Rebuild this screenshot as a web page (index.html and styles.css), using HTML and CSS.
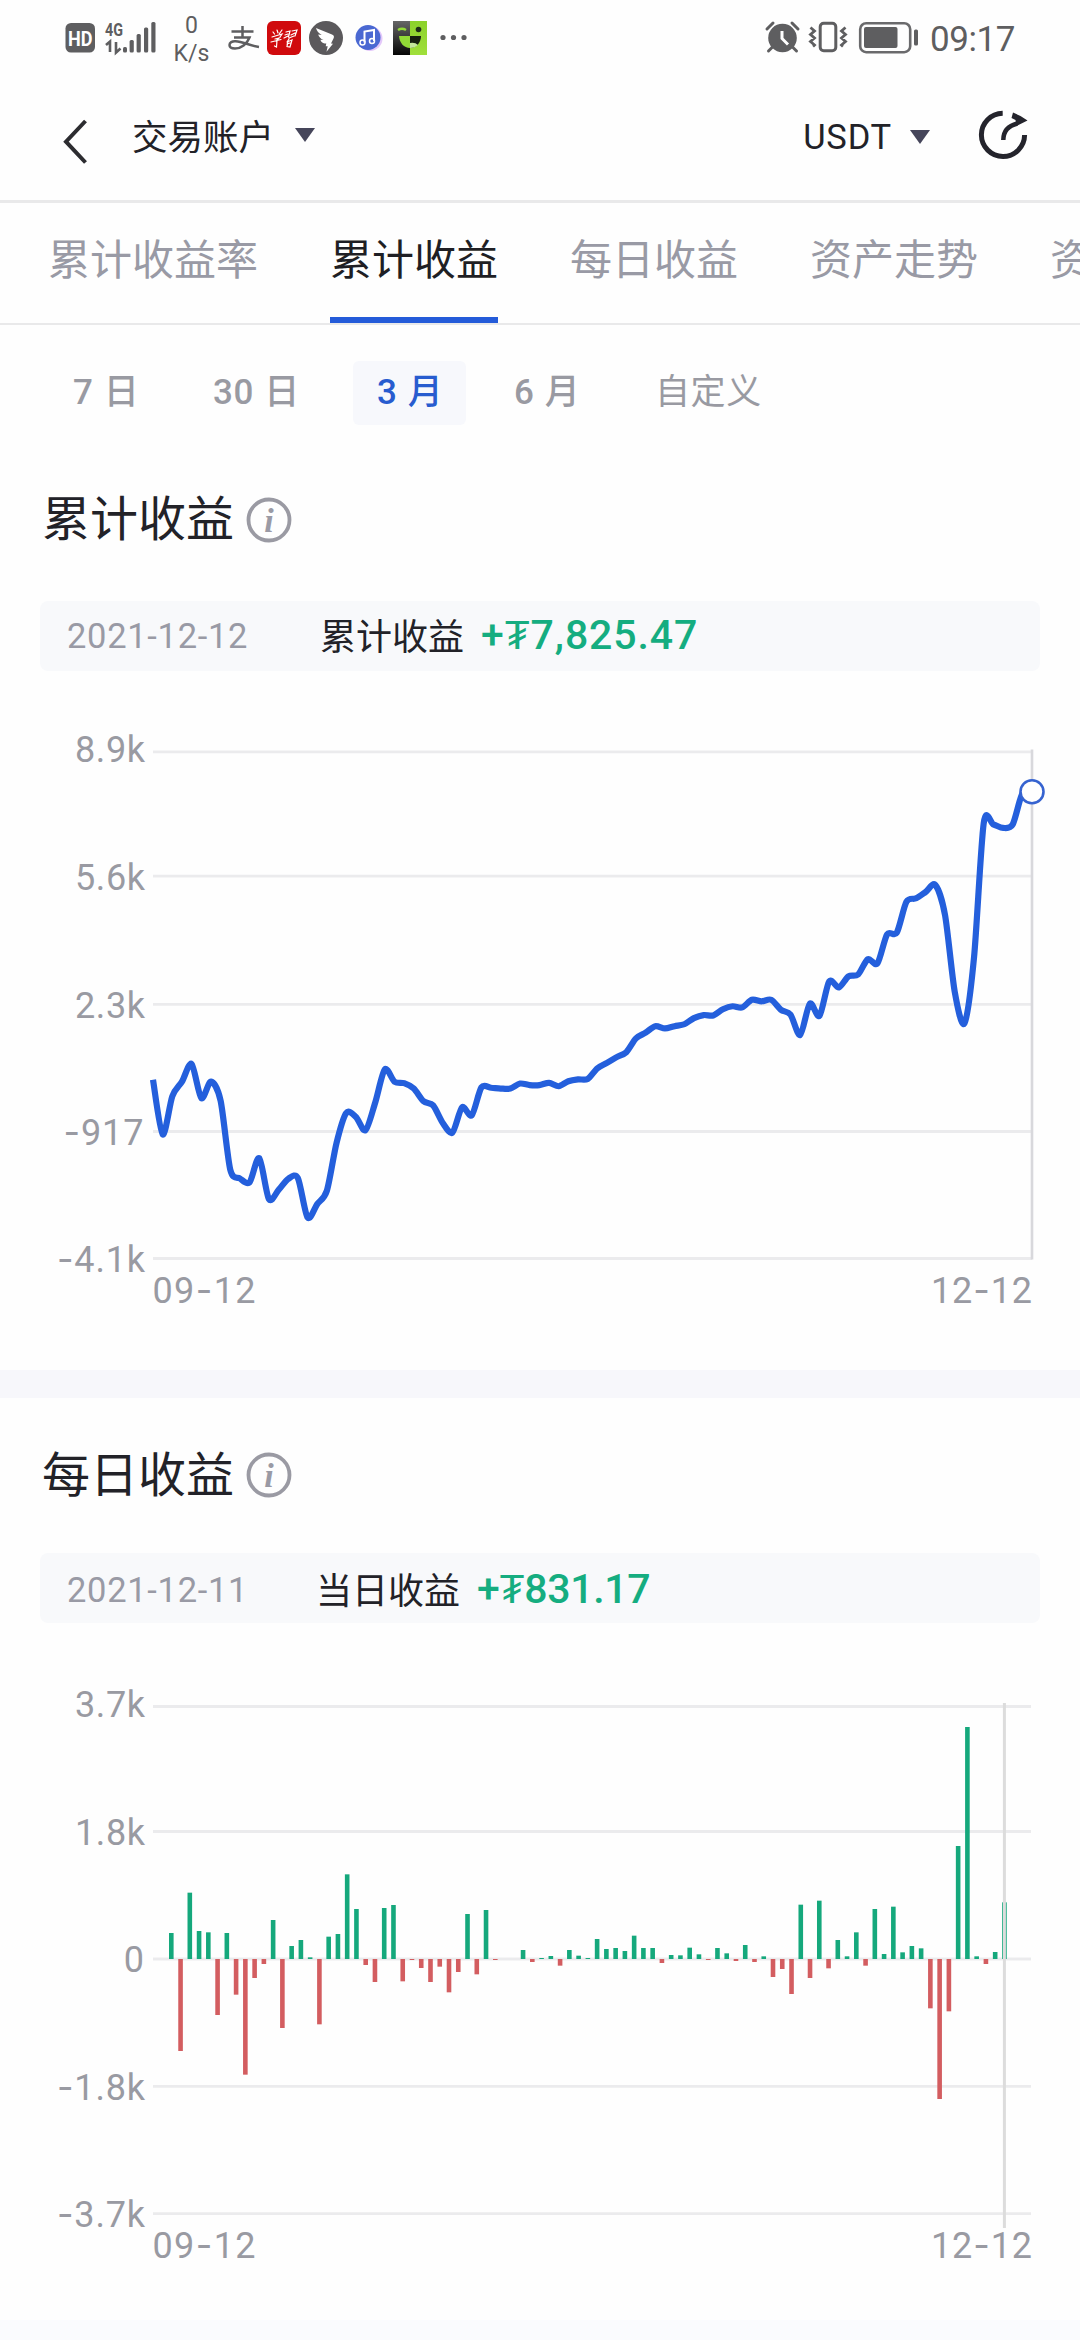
FILE: index.html
```html
<!DOCTYPE html>
<html lang="zh-CN">
<head>
<meta charset="utf-8">
<title>交易账户</title>
<link rel="stylesheet" href="styles.css">
</head>
<body>
<div class="status">
  <svg class="status-left" viewBox="0 0 480 76" width="480" height="76">
    <rect x="65.500" y="23" width="29.500" height="29.500" rx="5.500" fill="#5e5e60"/>
    <text class="st-hd" x="68" y="45.500" textLength="24.500" lengthAdjust="spacingAndGlyphs">HD</text>
    <text class="st-4g" x="105" y="36" textLength="18" lengthAdjust="spacingAndGlyphs">4G</text>
    <path d="M106 45l4-3.500v10.500M116 42v10.500l4.500-4" fill="none" stroke="#5e5e60" stroke-width="2.600"/>
    <g fill="#5e5e60"><rect x="123" y="47" width="4" height="5.500" rx="1.500"/><rect x="129.600" y="40" width="4.200" height="12.500" rx="1.500"/><rect x="136.600" y="34" width="4.200" height="18.500" rx="1.500"/><rect x="144" y="27.500" width="4.200" height="25" rx="1.500"/><rect x="151.300" y="22" width="4.200" height="30.500" rx="1.500"/></g>
    <text class="st-net" x="191.500" y="33" text-anchor="middle">0</text>
    <text class="st-net" x="191.500" y="60.500" text-anchor="middle">K/s</text>
    <path d="M231.500 31.500h22M242.500 26v11.500M234 37.500h15.500c-2.500 6.500-8.500 11-14.500 11-3.500 0-5.500-1.300-5.500-3.500 0-2.500 2.500-4 6-3.800 8 .500 13 4.300 23.500 5.800" fill="none" stroke="#5e5e60" stroke-width="2.500"/>
    <rect x="267" y="21" width="34" height="34" rx="6" fill="#d00a0d"/>
    <g fill="none" stroke="#fff" stroke-width="1.200" stroke-linecap="round"><path d="M273 32l1.500 2M277 30l1 3M282 30l-2.500 3.500M272 37l10-3-2 3M275 39l4-1-3 3M271 42l10-2.500M277 40l-.500 7-2-1"/><path d="M286 32l4-1-1.500 6M285 35l3-1M284 38l4-2M292 31l5-1-2 6M291 35l4-2M289 38l5-2M289 39l-2 3M287 42l5-2-2 7-3-.500 1-5M287 44l3-1"/></g>
    <circle cx="326" cy="38" r="17" fill="#5b595c"/>
    <path d="M316 28l16 6.500c2 .800 2.400 2 1.500 4l-2.500 5 2 .200-6.500 8 1.200-5.500h-2l.600-2.700c-4 0-5.500-2-5.800-3.800l3 .300c-3-1.300-4.800-3.300-5.300-5.500l3.500.500c-3-2-5-4-5.700-7z" fill="#fff"/>
    <circle cx="370" cy="38.500" r="12.500" fill="#e3c8fa"/><circle cx="368" cy="37.500" r="12.500" fill="#4a68d2"/>
    <path d="M364.500 42.500v-11l9.500-1.500v11" fill="none" stroke="#fff" stroke-width="2"/><circle cx="362.500" cy="42.500" r="2.500" fill="none" stroke="#fff" stroke-width="1.500"/><circle cx="372" cy="41" r="2.500" fill="none" stroke="#fff" stroke-width="1.500"/>
    <defs><linearGradient id="face-dark" x1="0" y1="0" x2="0" y2="1"><stop offset="0" stop-color="#666"/><stop offset="1" stop-color="#050505"/></linearGradient><linearGradient id="face-light" x1="0" y1="0" x2="0" y2="1"><stop offset="0" stop-color="#8bd22b"/><stop offset="1" stop-color="#a0df3b"/></linearGradient></defs>
    <rect x="393" y="21" width="17" height="34" fill="url(#face-dark)"/><rect x="410" y="21" width="17" height="34" fill="url(#face-light)"/>
    <path d="M398 30q4-2.500 8 0" fill="none" stroke="#91d936" stroke-width="2.400"/><circle cx="418.500" cy="29.500" r="2.800" fill="#1e2d19"/>
    <path d="M399 36h11v12c-6 0-10.500-5-11-12z" fill="#91d936"/><path d="M410 36h11c0 7-5 12-11 12z" fill="#17200f"/><path d="M410 43q5-1 8 2-3 3-8 3z" fill="#c5e89b"/>
    <g fill="#5e5e60"><circle cx="443" cy="37.500" r="2.600"/><circle cx="453.500" cy="37.500" r="2.600"/><circle cx="464" cy="37.500" r="2.600"/></g>
  </svg>
  <svg class="status-right" viewBox="760 0 320 76" width="320" height="76">
    <circle cx="782.500" cy="38" r="14.300" fill="#5e5e60"/>
    <path d="M767 29l6-6M792 23l6 6M768.500 51l4-4M796.500 51l-4-4" stroke="#5e5e60" stroke-width="3" fill="none" stroke-linecap="round"/>
    <path d="M782 31v7.500l6 6" fill="none" stroke="#fff" stroke-width="3"/>
    <rect x="820.200" y="23.200" width="15.600" height="27.600" rx="3.500" fill="none" stroke="#5e5e60" stroke-width="3"/>
    <path d="M810.500 27.500l4 3.500-4 3.500 4 3.500-4 3.500 4 3.500-1.500 1.500M845.500 27.500l-4 3.500 4 3.500-4 3.500 4 3.500-4 3.500 1.500 1.500" fill="none" stroke="#5e5e60" stroke-width="2.800"/>
    <rect x="860.200" y="23.200" width="50" height="29" rx="6" fill="none" stroke="#6a6a6c" stroke-width="2.600"/>
    <rect x="864" y="27" width="33.500" height="21" rx="2" fill="#5e5e60"/><rect x="914" y="29.500" width="4" height="16" rx="1.500" fill="#5e5e60"/>
    <text class="st-time" x="930" y="51" textLength="85.500">09:17</text>
  </svg>
</div>

<header class="header">
  <svg class="back" viewBox="0 0 24 46" width="24" height="46"><path d="M22.500 2L3 22.700 22.500 43.500" fill="none" stroke="#2c2c30" stroke-width="4"/></svg>
  <span class="account">交易账户</span><i class="caret"></i>
  <span class="currency">USDT</span><i class="caret caret-low"></i>
  <svg class="share" viewBox="0 0 52 52" width="52" height="52"><path d="M25.700 4.200A21.600 21.600 0 1 0 47.600 26" fill="none" stroke="#24242c" stroke-width="5"/><path d="M26.300 31c0-8.500 4-14 14-16.500" fill="none" stroke="#24242c" stroke-width="4.500"/><path d="M36 3.500l7.500 3.500 7 4.500-11 5.500-1-6-4-2z" fill="#24242c"/></svg>
</header>

<nav class="tabs"><span>累计收益率</span><span class="active">累计收益</span><span>每日收益</span><span>资产走势</span><span>资</span></nav>

<div class="periods"><span>7 日</span><span>30 日</span><span class="active">3 月</span><span>6 月</span><span class="custom">自定义</span></div>

<section class="panel">
  <h2>累计收益<svg class="info" viewBox="0 0 46 46" width="46" height="46"><circle cx="23" cy="23" r="20.500"/><text x="23" y="34.500" text-anchor="middle">i</text></svg></h2>
  <div class="summary summary-total"><span class="date">2021-12-12</span><span class="label">累计收益</span><span class="amount">+₮7,825.47</span></div>
  <svg class="chart" id="total" viewBox="0 671 1080 699" width="1080" height="699">
    <path class="grid" d="M153 751.800H1032M153 876.200H1032M153 1004.300H1032M153 1131.500H1032M153 1258.500H1032"/>
    <path class="cursor" d="M1032 749.500V1259.500"/>
    <g class="axis" text-anchor="end">
      <text x="145" y="762" textLength="70">8.9k</text><text x="145" y="890" textLength="70">5.6k</text><text x="145" y="1017.500" textLength="70">2.3k</text>
      <text x="143.500" y="1145" textLength="80"><tspan class="dash">-</tspan>917</text><text x="145" y="1272" textLength="88"><tspan class="dash">-</tspan>4.1k</text>
    </g>
    <text class="axis" x="152.500" y="1303" textLength="103">09<tspan class="dash">-</tspan>12</text>
    <text class="axis" x="1032" y="1303" text-anchor="end" textLength="101">12<tspan class="dash">-</tspan>12</text>
    <path class="line" id="line"/>
    <circle cx="1032" cy="791.700" r="11.500" fill="#fff" stroke="#3663d0" stroke-width="2.600"/>
  </svg>
</section>

<section class="panel panel-next">
  <h2>每日收益<svg class="info" viewBox="0 0 46 46" width="46" height="46"><circle cx="23" cy="23" r="20.500"/><text x="23" y="34.500" text-anchor="middle">i</text></svg></h2>
  <div class="summary summary-day"><span class="date">2021-12-11</span><span class="label">当日收益</span><span class="amount">+₮831.17</span></div>
  <svg class="chart" id="daily" viewBox="0 1623 1080 697" width="1080" height="697">
    <path class="grid" d="M153 1706.500H1031M153 1831.500H1031M153 1959H1031M153 2086.400H1031M153 2213.700H1031"/>
    <g id="bars"></g>
    <path class="cursor cursor-day" d="M1004.400 1703V2228"/>
    <g class="axis" text-anchor="end">
      <text x="145" y="1717" textLength="70">3.7k</text><text x="145" y="1845" textLength="70">1.8k</text><text x="144" y="1972">0</text>
      <text x="145" y="2099.500" textLength="88"><tspan class="dash">-</tspan>1.8k</text><text x="145" y="2226.700" textLength="88"><tspan class="dash">-</tspan>3.7k</text>
    </g>
    <text class="axis" x="152.500" y="2258" textLength="103">09<tspan class="dash">-</tspan>12</text>
    <text class="axis" x="1032" y="2258" text-anchor="end" textLength="101">12<tspan class="dash">-</tspan>12</text>
  </svg>
</section>
<div class="foot"></div>
<script src="charts.js"></script>
</body>
</html>
```
FILE: styles.css
```css
* { box-sizing: border-box; }
body { margin: 0; width: 1080px; height: 2340px; overflow: hidden; background: #fefefe; color: #222228; font-family: Roboto, "Noto Sans CJK SC", sans-serif; }
.status { display: flex; justify-content: space-between; height: 76px; }
.st-hd { font: 700 20px Roboto, sans-serif; fill: #fff; }
.st-4g { font: 700 19px Roboto, sans-serif; fill: #5e5e60; }
.st-net { font: 400 23px Roboto, sans-serif; fill: #5e5e60; }
.st-time { font: 400 35px Roboto, sans-serif; fill: #5e5e60; }

.header { display: flex; align-items: center; height: 127px; padding: 0 50px 0 63px; border-bottom: 3px solid #e9e9ea; }
.back { margin-top: 7px; }
.account { margin-left: 45px; font-size: 35.500px; line-height: 50px; }
.caret { margin: -7px 0 0 21px; border: 10px solid transparent; border-top: 14px solid #45455a; border-bottom: 0; }
.currency { margin: -3px 0 0 auto; font-size: 34.500px; line-height: 50px; letter-spacing: .8px; }
.caret-low { margin: -3px 47px 0 18px; }
.share { margin-top: -6px; margin-right: 1px; }

.tabs { display: flex; gap: 72px; height: 122px; padding-left: 48px; border-bottom: 2px solid #e9e9ea; font-size: 42px; line-height: 116px; color: #999aa5; white-space: nowrap; overflow: hidden; }
.tabs span { flex: none; height: 120px; }
.tabs .active { color: #1f1f24; border-bottom: 6px solid #245bd9; }

.periods { display: grid; grid-template-columns: 140px 164px 137px 143px 200px; align-items: center; height: 135px; padding-left: 49px; color: #999aa2; font-size: 35px; font-weight: 500; font-family: Roboto, "Noto Sans CJK SC", sans-serif; }
.periods span { justify-self: start; padding: 0 23px 0 24px; height: 64px; line-height: 63px; border-radius: 6px; white-space: nowrap; letter-spacing: .6px; word-spacing: 1px; }
.periods .active { background: #f7f8fc; color: #285ccf; }
.periods .custom { font-weight: 400; padding-left: 22px; }

h2 { display: flex; align-items: center; margin: 0; height: 120px; padding-left: 42px; font-size: 48px; line-height: 72px; font-weight: 400; }
.info { margin-left: 12px; }
.info circle { fill: none; stroke: #9a9aa3; stroke-width: 3.800px; }
.info text { font: italic 700 34px "Liberation Serif", serif; fill: #9a9aa5; }
.summary { display: flex; align-items: center; width: 1000px; height: 70px; margin: 21px 0 0 40px; padding-left: 27px; border-radius: 8px; background: #f8f9fb; }
.date { width: 253px; font-size: 34.500px; letter-spacing: .7px; color: #999aa5; }
.label { width: 161px; font-size: 36px; margin-top: -4px; }
.amount { font-size: 41px; font-weight: 500; color: #15ad80; white-space: nowrap; }
.summary-total .amount { letter-spacing: .9px; margin-top: -2px; }
.summary-day .amount { letter-spacing: -.3px; margin-top: 1px; }
.summary-day .date { width: 249px; margin-top: 4px; }
.summary-day .label { margin-top: -1px; }
.panel-next { border-top: 28px solid #f7f7fb; }
.panel-next h2 { height: 155px; }
.panel-next .info { margin-top: -2px; }
.panel-next .summary { margin-top: 0; }
.chart { display: block; }
.grid { fill: none; stroke: #ebebed; stroke-width: 2.800px; }
.cursor { stroke: #d8d8dc; stroke-width: 2.600px; }
.cursor-day { stroke: #dcdcdc; stroke-width: 3px; }
.axis { font: 400 36px Roboto, sans-serif; fill: #999aa2; }
.dash { font-family: Inter, sans-serif; }
.line { fill: none; stroke: #245fdc; stroke-width: 6.200px; stroke-linejoin: round; }
.bar-up { fill: #15a87c; }
.bar-down { fill: #d35d60; }
.foot { height: 20px; background: #fafbfe; }
```
FILE: charts.js
```js
const NS = 'http://www.w3.org/2000/svg';

// Accumulated profit, one level per day.
const total = [940,1083,983,945,899,988,945,995,1175,1198,1208,1145,1252,1228,1199,1197,1300,1265,1230,1105,1027,1037,1072,1000,913,945,949,963,996,1007,1053,1078,1012,1033,960,961,963,963,950,954,954,948,957,944,939,938,910,896,881,868,832,817,800,806,800,795,779,771,772,756,748,751,731,735,731,757,770,823,741,773,683,699,670,665,625,636,560,556,475,466,449,431,510,710,793,620,270,273,282,273,192,187];
const step = (1032 - 153) / (total.length - 1);
const pts = total.map((v, i) => [153 + i * step, 720 + v / 2.613]);
const k = 0.14;
let d = `M${pts[0]}`;
for (let i = 1; i < pts.length; i++) {
  const a = pts[i - 1], b = pts[i];
  const before = pts[i - 2] || a, after = pts[i + 1] || b;
  const c1 = [a[0] + (b[0] - before[0]) * k, a[1] + (b[1] - before[1]) * k];
  const c2 = [b[0] - (after[0] - a[0]) * k, b[1] - (after[1] - a[1]) * k];
  d += `C${c1} ${c2} ${b}`;
}
document.getElementById('line').setAttribute('d', d);

// Profit per day, signed.
const daily = [78,-276,199,84,80,-168,78,-107,-347,-57,-15,117,-207,39,57,5,-196,67,75,254,150,-18,-69,153,162,-67,-3,-27,-69,-23,-100,-39,135,-46,147,-3,0,0,27,-9,3,9,-20,27,10,3,60,30,33,24,70,33,33,-12,12,11,34,14,-3,33,17,-6,42,-9,8,-54,-30,-105,163,-57,175,-28,57,8,80,-20,150,15,157,20,39,32,-148,-420,-157,339,696,8,-15,21,170];
const group = document.getElementById('bars');
daily.forEach((v, i) => {
  const h = Math.abs(v) / 3;
  const bar = document.createElementNS(NS, 'rect');
  bar.setAttribute('x', (171.3 + i * 9.257 - 2.3).toFixed(2));
  bar.setAttribute('y', v > 0 ? 1959 - h : 1959);
  bar.setAttribute('width', 4.6);
  bar.setAttribute('height', h);
  bar.setAttribute('class', v > 0 ? 'bar-up' : 'bar-down');
  group.appendChild(bar);
});
```
